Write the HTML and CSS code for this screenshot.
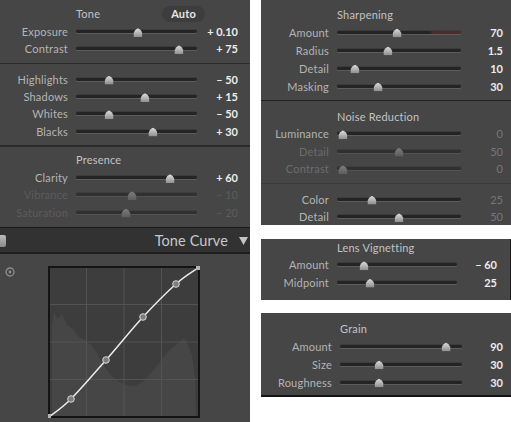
FILE: index.html
```html
<!DOCTYPE html>
<html lang="en">
<head>
<meta charset="utf-8">
<title>Develop panels</title>
<link rel="stylesheet" href="styles.css">
</head>
<body>
<div class="sheet">

  <!-- Basic panel with the tone curve below -->
  <section class="panel panel-basic">
    <div class="group group-tone">
      <div class="row head">
        <span></span>
        <span class="head-title">Tone<span class="auto-btn">Auto</span></span>
      </div>
      <div class="row"><span class="lab">Exposure</span><span class="track"><i class="thumb" style="left:51.2%"></i></span><span class="val">+ 0.10</span></div>
      <div class="row"><span class="lab">Contrast</span><span class="track"><i class="thumb" style="left:85.1%"></i></span><span class="val">+ 75</span></div>
    </div>
    <div class="group group-tonal">
      <div class="row"><span class="lab">Highlights</span><span class="track"><i class="thumb" style="left:27.3%"></i></span><span class="val">– 50</span></div>
      <div class="row"><span class="lab">Shadows</span><span class="track"><i class="thumb" style="left:57%"></i></span><span class="val">+ 15</span></div>
      <div class="row"><span class="lab">Whites</span><span class="track"><i class="thumb" style="left:27.3%"></i></span><span class="val">– 50</span></div>
      <div class="row"><span class="lab">Blacks</span><span class="track"><i class="thumb" style="left:63.6%"></i></span><span class="val">+ 30</span></div>
    </div>
    <div class="group group-presence">
      <div class="row head"><span></span><span class="head-title">Presence</span></div>
      <div class="row"><span class="lab">Clarity</span><span class="track"><i class="thumb" style="left:77.7%"></i></span><span class="val">+ 60</span></div>
      <div class="row dim"><span class="lab">Vibrance</span><span class="track"><i class="thumb" style="left:46.3%"></i></span><span class="val">– 10</span></div>
      <div class="row dim"><span class="lab">Saturation</span><span class="track"><i class="thumb" style="left:41.3%"></i></span><span class="val">– 20</span></div>
    </div>

    <div class="curve-bar">
      <span class="panel-switch"></span>
      <span class="curve-title">Tone Curve</span>
      <svg class="collapse" width="9" height="9" viewBox="0 0 9 9"><path d="M0 1 H9 L4.5 9 Z" fill="#c4c4c4"/></svg>
    </div>

    <div class="curve-area">
      <svg class="target" width="10" height="10" viewBox="0 0 10 10">
        <circle cx="5" cy="5" r="4" fill="none" stroke="#8c8c8c" stroke-width="1.3"/>
        <circle cx="5" cy="5" r="1.4" fill="#8c8c8c"/>
      </svg>
      <svg class="curve" width="152" height="152" viewBox="-1 -1 152 152">
        <rect x="0" y="0" width="150" height="150" fill="#3d3d3d"/>
        <!-- histogram -->
        <path d="M3 150 L3 60 L5 46 L9 52 L13 47 L18 58 L24 62 L30 70 L36 73 L42 78 L48 86 L54 98 L62 108 L70 115 L78 118 L86 119 L94 115 L102 106 L110 96 L118 86 L124 80 L130 76 L135 71 L139 78 L143 88 L146 110 L147 150 Z" fill="#464646"/>
        <!-- grid -->
        <g stroke="#535353" stroke-width="1">
          <line x1="37.5" y1="0" x2="37.5" y2="150"/>
          <line x1="75" y1="0" x2="75" y2="150"/>
          <line x1="112.5" y1="0" x2="112.5" y2="150"/>
          <line x1="0" y1="37.5" x2="150" y2="37.5"/>
          <line x1="0" y1="75" x2="150" y2="75"/>
          <line x1="0" y1="112.5" x2="150" y2="112.5"/>
        </g>
        <rect x="0" y="0" width="150" height="150" fill="none" stroke="#141414" stroke-width="2"/>
        <path d="M0 150 C3.7 147 12.5 141.5 22 132 C31.5 122.5 45 106.7 57 93 C69 79.3 82.3 62.7 94 50 C105.7 37.3 117.8 25.2 127 17 C136.2 8.8 145.3 3.7 149 1" fill="none" stroke="#ececec" stroke-width="1.5"/>
        <g fill="#7c7c7c" stroke="#d6d6d6" stroke-width="1">
          <circle cx="22" cy="132" r="3.3"/>
          <circle cx="57" cy="93" r="3.3"/>
          <circle cx="94" cy="50" r="3.3"/>
          <circle cx="127" cy="17" r="3.3"/>
        </g>
        <rect x="-2" y="147" width="4" height="4" fill="#b4b4b4"/>
        <rect x="147" y="-1" width="4" height="4" fill="#b4b4b4"/>
      </svg>
    </div>
  </section>

  <div class="column">
    <!-- Detail panel -->
    <section class="panel panel-detail">
      <div class="group group-sharp">
        <div class="row head"><span></span><span class="head-title">Sharpening</span></div>
        <div class="row"><span class="lab">Amount</span><span class="track warm"><i class="thumb" style="left:48.4%"></i></span><span class="val">70</span></div>
        <div class="row"><span class="lab">Radius</span><span class="track"><i class="thumb" style="left:41.1%"></i></span><span class="val">1.5</span></div>
        <div class="row"><span class="lab">Detail</span><span class="track"><i class="thumb" style="left:14.5%"></i></span><span class="val">10</span></div>
        <div class="row"><span class="lab">Masking</span><span class="track"><i class="thumb" style="left:33.1%"></i></span><span class="val">30</span></div>
      </div>
      <div class="group group-noise">
        <div class="row head"><span></span><span class="head-title">Noise Reduction</span></div>
        <div class="row"><span class="lab">Luminance</span><span class="track"><i class="thumb" style="left:4.8%"></i></span><span class="val soft">0</span></div>
        <div class="row faint"><span class="lab">Detail</span><span class="track"><i class="thumb" style="left:50%"></i></span><span class="val soft">50</span></div>
        <div class="row faint"><span class="lab">Contrast</span><span class="track"><i class="thumb" style="left:4.8%"></i></span><span class="val soft">0</span></div>
      </div>
      <div class="group group-color">
        <div class="row"><span class="lab">Color</span><span class="track"><i class="thumb" style="left:28.2%"></i></span><span class="val soft">25</span></div>
        <div class="row"><span class="lab">Detail</span><span class="track"><i class="thumb" style="left:50%"></i></span><span class="val soft">50</span></div>
      </div>
    </section>

    <!-- Lens Vignetting -->
    <section class="panel panel-vignette">
      <div class="row head"><span></span><span class="head-title">Lens Vignetting</span></div>
      <div class="row"><span class="lab">Amount</span><span class="track"><i class="thumb" style="left:22.5%"></i></span><span class="val">– 60</span></div>
      <div class="row"><span class="lab">Midpoint</span><span class="track"><i class="thumb" style="left:27.5%"></i></span><span class="val">25</span></div>
    </section>

    <!-- Grain -->
    <section class="panel panel-grain">
      <div class="row head"><span></span><span class="head-title">Grain</span></div>
      <div class="row"><span class="lab">Amount</span><span class="track"><i class="thumb" style="left:86.9%"></i></span><span class="val">90</span></div>
      <div class="row"><span class="lab">Size</span><span class="track"><i class="thumb" style="left:32%"></i></span><span class="val">30</span></div>
      <div class="row"><span class="lab">Roughness</span><span class="track"><i class="thumb" style="left:32%"></i></span><span class="val">30</span></div>
    </section>
  </div>

</div>
</body>
</html>
```

FILE: styles.css
```css
html, body {
  margin: 0;
  background: #ffffff;
}

body {
  font-family: Lato, "DejaVu Sans", sans-serif;
  font-size: 11px;
}

.sheet {
  display: flex;
  gap: 11px;
  width: 511px;
  height: 422px;
  overflow: hidden;
}

.panel {
  background: #464646;
  color: #b4b4b4;
  box-sizing: border-box;
}

/* slider rows */
.row {
  display: grid;
  grid-template-columns: var(--lab) var(--trk) 1fr;
  column-gap: 8px;
  align-items: center;
  height: var(--rh);
  padding-right: var(--pr);
}

.lab {
  text-align: right;
  white-space: nowrap;
  letter-spacing: 0.2px;
}

.val {
  text-align: right;
  white-space: nowrap;
  color: #ececec;
  font-weight: 700;
}

.val.soft {
  color: #767676;
  font-weight: 400;
}

.head {
  height: 18px;
}

.head-title {
  grid-column: 2 / 4;
  color: #c2c2c2;
  white-space: nowrap;
  letter-spacing: 0.2px;
}

.auto-btn {
  display: inline-block;
  margin-left: 62px;
  padding: 0 9px;
  height: 16px;
  line-height: 16px;
  border-radius: 8px;
  background: #3d3d3d;
  color: #e6e6e6;
  font-weight: 700;
}

.track {
  position: relative;
  height: 3px;
  border-radius: 2px;
  background: #242424;
  box-shadow: 0 1px 0 #5c5c5c, 0 -1px 0 #3c3c3c;
}

.track.warm {
  background: linear-gradient(90deg, #242424 0 74%, #4a2e2e 78% 100%);
}

.thumb {
  position: absolute;
  top: 50%;
  width: 9px;
  height: 9px;
  transform: translate(-50%, -40%);
  background: linear-gradient(#dedede, #8c8c8c);
  clip-path: polygon(50% 0, 80% 22%, 100% 55%, 100% 100%, 0 100%, 0 55%, 20% 22%);
}

.dim .lab,
.dim .val {
  color: #5c5c5c;
  font-weight: 400;
}

.dim .track,
.faint .track {
  background: #303030;
  box-shadow: 0 1px 0 #535353, 0 -1px 0 #3e3e3e;
}

.dim .thumb,
.faint .thumb {
  background: linear-gradient(#7e7e7e, #5c5c5c);
}

.faint .lab {
  color: #6c6c6c;
}

/* left panel */
.panel-basic {
  width: 250px;
  height: 422px;
  display: flex;
  flex-direction: column;
  --lab: 68px;
  --trk: 121px;
  --pr: 12px;
  --rh: 17.3px;
}

.group-tone {
  padding: 5px 0 5px;
  border-bottom: 1px solid #2b2b2b;
}

.group-tonal {
  padding: 7px 0 5px;
  border-bottom: 2px solid #2b2b2b;
}

.group-presence {
  padding: 4.2px 0 6px;
}

.curve-bar {
  display: flex;
  align-items: center;
  height: 27px;
  box-sizing: border-box;
  padding: 2px 2px 0 0;
  background: #323232;
  border-top: 1px solid #1a1a1a;
  border-bottom: 2px solid #1e1e1e;
}

.panel-switch {
  width: 6px;
  height: 12px;
  border-radius: 0 2px 2px 0;
  background: linear-gradient(#bcbcbc, #8a8a8a);
}

.curve-title {
  margin-left: auto;
  margin-right: 11px;
  font-size: 14.5px;
  color: #c8c8c8;
  letter-spacing: 0.1px;
}

.collapse {
  display: block;
}

.curve-area {
  flex: 1;
  display: flex;
  align-items: flex-start;
  padding: 12px 0 0 5px;
}

.target {
  display: block;
  margin-top: 1px;
}

.curve {
  display: block;
  margin-left: 33px;
}

/* right column */
.column {
  width: 250px;
  display: flex;
  flex-direction: column;
}

.panel-detail {
  height: 225px;
  margin-bottom: 14px;
  --lab: 68px;
  --trk: 124px;
  --pr: 8px;
}

.group-sharp {
  --rh: 18px;
  padding: 5px 0 5px;
  border-bottom: 1px solid #232323;
}

.group-noise {
  --rh: 17.5px;
  padding: 6px 0 5px;
  border-bottom: 1px solid #3a3a3a;
}

.group-color {
  --rh: 17.5px;
  padding-top: 7px;
}

.panel-vignette {
  height: 61px;
  margin-bottom: 13px;
  border-right: 1px solid #1c1c1c;
  --lab: 68px;
  --trk: 120px;
  --pr: 13px;
  --rh: 17.5px;
}

.panel-vignette .head {
  height: 17px;
}

.panel-grain {
  height: 84px;
  padding-top: 6px;
  border-bottom: 2px solid #141414;
  --lab: 71px;
  --trk: 122px;
  --pr: 8px;
  --rh: 18px;
}
```
